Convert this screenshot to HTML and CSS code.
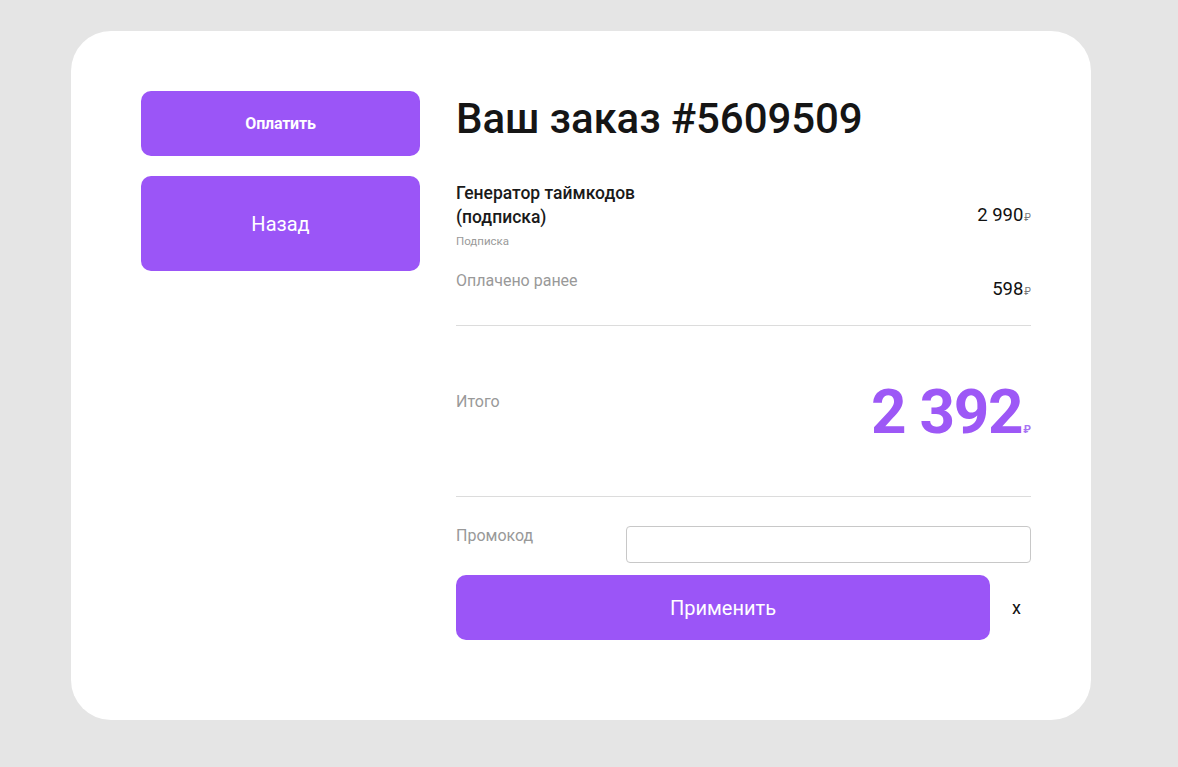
FILE: index.html
```html
<!DOCTYPE html>
<html lang="ru">
<head>
<meta charset="utf-8">
<title>Ваш заказ</title>
<link rel="stylesheet" href="styles.css">
</head>
<body>
<div class="card">
  <div class="side">
    <button class="btn btn-pay">Оплатить</button>
    <button class="btn btn-back">Назад</button>
  </div>
  <div class="main">
    <h1 class="title">Ваш заказ #5609509</h1>
    <div class="item">
      <div class="item-info">
        <div class="item-name">Генератор таймкодов<br>(подписка)</div>
        <div class="item-type">Подписка</div>
      </div>
      <div class="price">2 990<span class="rub">₽</span></div>
    </div>
    <div class="paid">
      <div class="muted">Оплачено ранее</div>
      <div class="price paid-price">598<span class="rub">₽</span></div>
    </div>
    <div class="total">
      <div class="muted total-label">Итого</div>
      <div class="total-sum">2 392<span class="rub rub-big">₽</span></div>
    </div>
    <div class="promo">
      <div class="muted promo-label">Промокод</div>
      <input class="promo-input" type="text">
    </div>
    <div class="apply-row">
      <button class="btn btn-apply">Применить</button>
      <span class="close">x</span>
    </div>
  </div>
</div>
</body>
</html>
```

FILE: styles.css
```css
* { box-sizing: border-box; }
body {
  margin: 0;
  background: #e5e5e5;
  font-family: Roboto, "Noto Sans", sans-serif;
  color: #1a1a1a;
  height: 767px;
}
.card {
  margin: 31px 0 0 71px;
  width: 1020px;
  height: 689px;
  background: #fff;
  border-radius: 40px;
  padding: 60px 60px 80px 70px;
  display: flex;
  gap: 36px;
}
.side {
  width: 279px;
  flex: none;
  display: flex;
  flex-direction: column;
  gap: 20px;
}
.btn {
  border: none;
  background: #9b55f7;
  color: #fff;
  border-radius: 10px;
  font-family: Roboto, sans-serif;
  cursor: pointer;
}
.btn-pay {
  height: 65px;
  font-size: 16px;
  font-weight: 700;
  letter-spacing: -0.2px;
}
.btn-back {
  height: 95px;
  font-size: 20px;
  font-weight: 400;
}
.main {
  flex: 1;
  display: flex;
  flex-direction: column;
}
.title {
  margin: 0;
  font-size: 42px;
  font-weight: 500;
  line-height: 56px;
  color: #151515;
  letter-spacing: -0.1px;
}
.item {
  margin-top: 34px;
  display: flex;
  justify-content: space-between;
  align-items: center;
}
.item-name {
  font-size: 17.5px;
  font-weight: 500;
  line-height: 24px;
}
.item-type {
  font-size: 11.5px;
  color: #9a9a9a;
  margin-top: 5px;
}
.price {
  font-size: 18.5px;
  color: #111;
}
.rub {
  font-size: 10px;
  margin-left: 1px;
  color: #777;
}
.muted {
  color: #999;
  font-size: 16px;
}
.paid {
  margin-top: 23px;
  display: flex;
  justify-content: space-between;
  padding-bottom: 22px;
  border-bottom: 1px solid #dcdcdc;
}
.paid-price {
  margin-top: 7px;
  margin-bottom: 3px;
}
.total {
  height: 171px;
  display: flex;
  justify-content: space-between;
  align-items: center;
  border-bottom: 1px solid #dcdcdc;
}
.total-label {
  margin-top: -20px;
}
.total-sum {
  font-size: 62px;
  font-weight: 700;
  color: #9d58f6;
  letter-spacing: -1.3px;
}
.rub-big {
  font-size: 11px;
  letter-spacing: 0;
  color: #a873f3;
}
.promo {
  margin-top: 29px;
  display: flex;
  justify-content: space-between;
  align-items: flex-start;
}
.promo-input {
  width: 405px;
  height: 37px;
  border: 1px solid #c8c8c8;
  border-radius: 4px;
}
.apply-row {
  margin-top: 12px;
  display: flex;
  align-items: center;
}
.btn-apply {
  width: 534px;
  height: 65px;
  font-size: 20px;
}
.close {
  margin-left: 22px;
  font-size: 18px;
  color: #111;
}
```
